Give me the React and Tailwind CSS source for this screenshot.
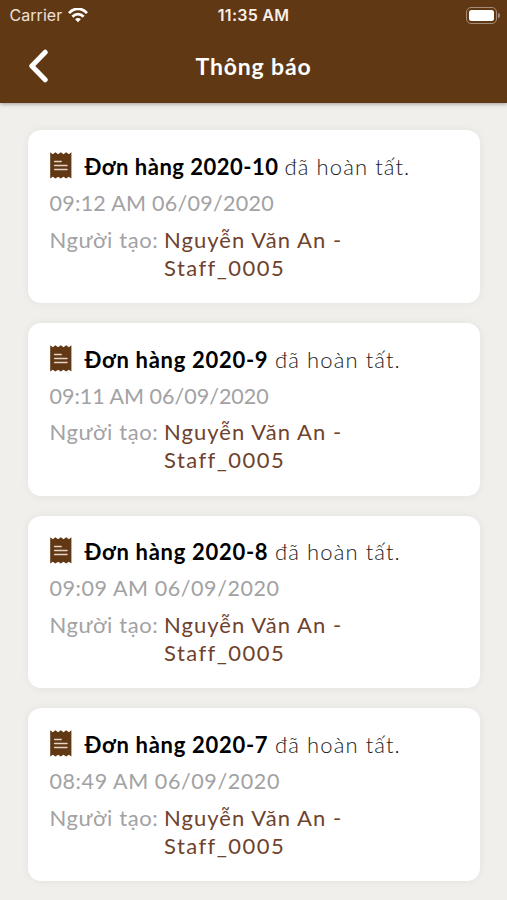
const orders = [
  { id: "2020-10", time: "09:12 AM 06/09/2020", titleStyle: "w-[200px] tracking-[0.5px]", timeTrack: "tracking-[0.27px]" },
  { id: "2020-9", time: "09:11 AM 06/09/2020", titleStyle: "w-[190.5px] tracking-[0.7px]", timeTrack: "tracking-[0px]" },
  { id: "2020-8", time: "09:09 AM 06/09/2020", titleStyle: "w-[190.5px] tracking-[0.7px]", timeTrack: "tracking-[0.57px]" },
  { id: "2020-7", time: "08:49 AM 06/09/2020", titleStyle: "w-[190.5px] tracking-[0.7px]", timeTrack: "tracking-[0.59px]" },
];

function WifiIcon() {
  return (
    <svg className="ml-[6px] h-[15px] w-[20px]" viewBox="0 0 20 15" fill="none" stroke="#fff" strokeWidth="2.8">
      <path d="M1 5.2C6-.6 14-.6 19 5.2" />
      <path d="M4.4 8.8c3.2-3.5 8-3.5 11.2 0" />
      <path d="M10 14.2 7.1 11.3c1.6-1.6 4.2-1.6 5.8 0z" fill="#fff" stroke="none" />
    </svg>
  );
}

function ReceiptIcon() {
  return (
    <svg className="block h-[27px] w-[22px] shrink-0" viewBox="0 0 22 27">
      <path
        fill="#603813"
        d="M.2.3 2.8 2.2 5.4.3 8.1 2.2 10.8.3 13.5 2.2 16.2.3 18.8 2.2 21.4.3V26.6L18.8 24.7 16.2 26.6 13.5 24.7 10.8 26.6 8.1 24.7 5.4 26.6 2.8 24.7.2 26.6z"
      />
      <path stroke="#e6d3c8" strokeWidth="1.5" strokeLinecap="round" d="M4.6 9.5h6.6M4.6 13.5h12.4M4.6 17.5h12.4" />
    </svg>
  );
}

function OrderCard({ order }) {
  return (
    <article className="h-[172.7px] shrink-0 rounded-[13px] bg-white pl-[22px] pt-[21.7px] text-[22px] leading-[28px] whitespace-nowrap shadow-[0_0_8px_rgba(0,0,0,0.06)]">
      <div className="flex h-[30px]">
        <ReceiptIcon />
        <h2 className={`ml-[13px] pt-px font-bold text-black ${order.titleStyle}`}>Đơn hàng {order.id}</h2>
        <span className="pt-px font-light tracking-[1.1px] text-[#222]">đã hoàn tất.</span>
      </div>
      <p className={`mt-[7px] text-[21.5px] text-[#a2a2a4] ${order.timeTrack}`}>{order.time}</p>
      <div className="mt-[8.5px] flex">
        <span className="w-[114.5px] tracking-[0.6px] text-[#a2a2a4]">Người tạo:</span>
        <p className="text-[#6f422d]">
          <span className="block tracking-[1.05px]">Nguyễn Văn An -</span>
          <span className="block tracking-[1.45px]">Staff_0005</span>
        </p>
      </div>
    </article>
  );
}

export default function App() {
  return (
    <div className="flex h-[900px] w-[507px] flex-col overflow-hidden bg-[#f0efec] font-['Lato','Noto_Sans',sans-serif]">
      <header className="z-10 h-[103px] shrink-0 bg-[#603813] text-white shadow-[0_1px_4px_rgba(0,0,0,0.35)]">
        <div className="grid h-[30px] grid-cols-3 items-center font-['Inter',sans-serif] text-[16px]">
          <div className="flex items-center pl-[9.5px] tracking-[0.05px] text-[#eee0d9]">
            Carrier
            <WifiIcon />
          </div>
          <div className="text-center font-semibold tracking-[0.25px] text-[#fbeee6]">11:35 AM</div>
          <div className="flex items-center justify-end pr-[7px]">
            <div className="h-[17px] w-[31px] rounded-[5px] border border-[#a68b78] p-[2px]">
              <div className="h-full rounded-[2.5px] bg-white" />
            </div>
            <div className="ml-px h-[5px] w-[2px] rounded-r bg-[#a68b78]" />
          </div>
        </div>
        <div className="grid h-[73px] grid-cols-[1fr_auto_1fr] items-center">
          <svg className="mb-[2px] ml-[28px] h-[34px] w-[22px]" viewBox="0 0 22 34" fill="none" stroke="#fff" strokeWidth="5" strokeLinecap="round" strokeLinejoin="round">
            <path d="M17.2 3.2 3.8 17 17.2 30.8" />
          </svg>
          <h1 className="text-[23px] font-bold tracking-[0.85px]">Thông báo</h1>
        </div>
      </header>
      <main className="flex flex-col gap-5 px-[27.5px] pt-[27.4px]">
        {orders.map((order) => (
          <OrderCard key={order.id} order={order} />
        ))}
      </main>
    </div>
  );
}
